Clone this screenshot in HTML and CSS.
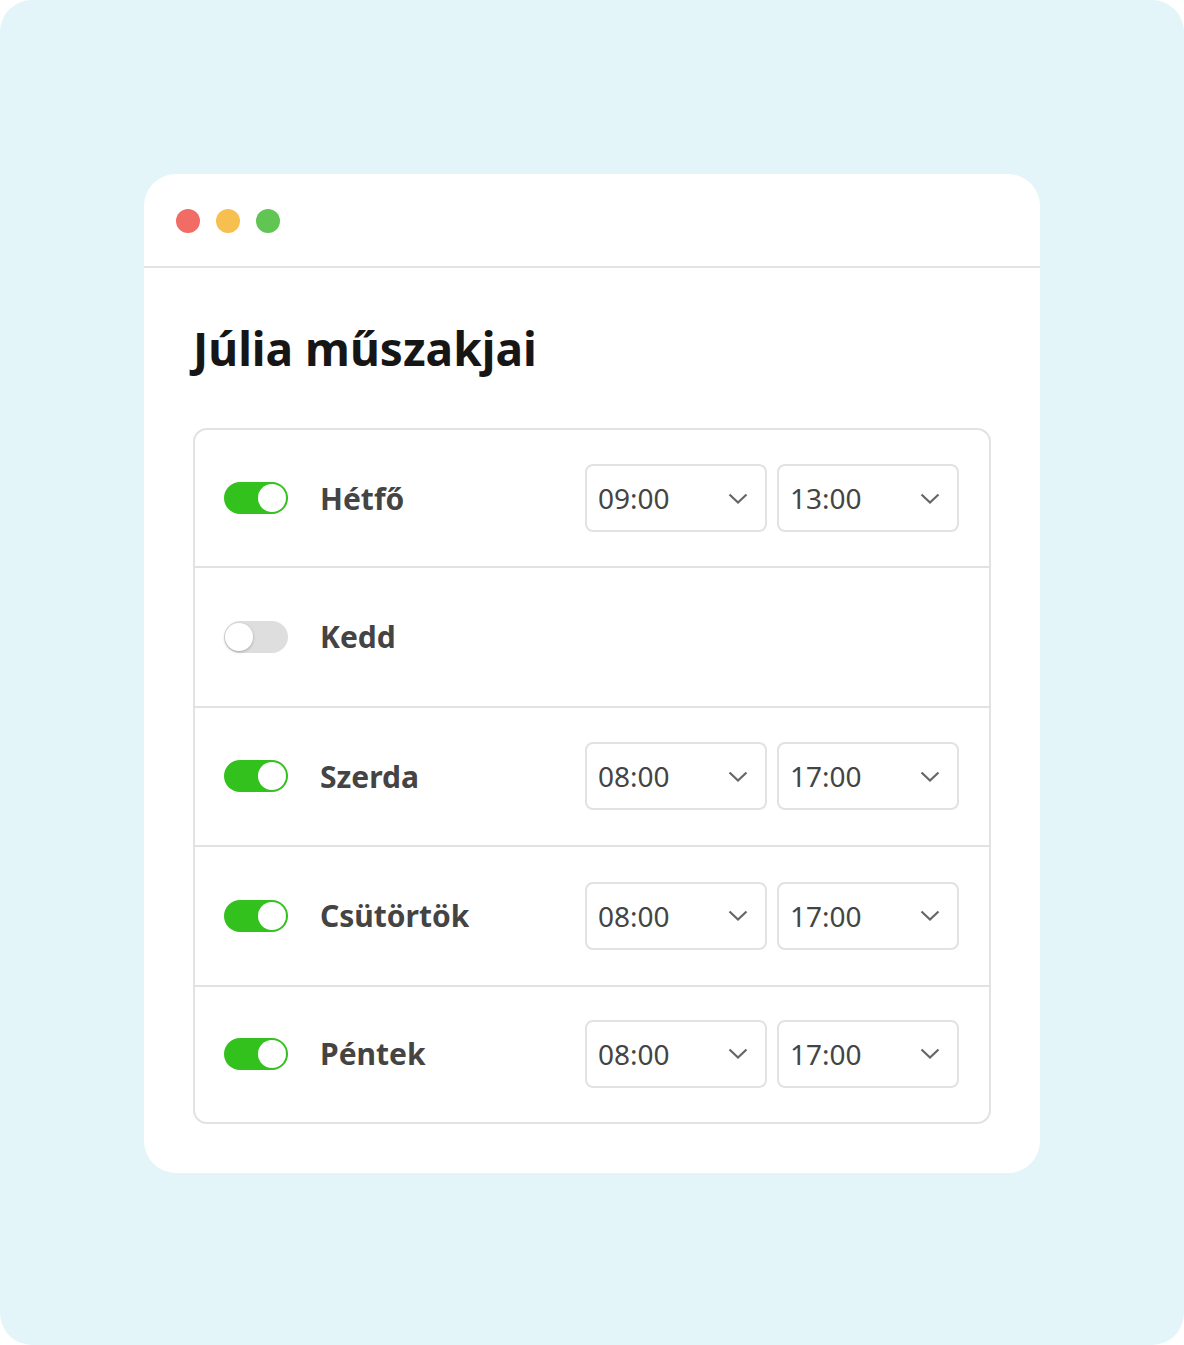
FILE: index.html
```html
<!DOCTYPE html>
<html lang="hu">
<head>
<meta charset="utf-8">
<title>Júlia műszakjai</title>
<link rel="stylesheet" href="styles.css">
</head>
<body>
<div class="stage">
  <div class="window">
    <div class="titlebar">
      <span class="dot red"></span>
      <span class="dot yellow"></span>
      <span class="dot green"></span>
    </div>
    <div class="content">
      <h1 class="title">Júlia műszakjai</h1>
      <div class="list">
        <div class="row">
          <span class="toggle on"><span class="knob"></span></span>
          <span class="day">Hétfő</span>
          <div class="times">
            <div class="select"><span>09:00</span><svg class="chev" viewBox="0 0 20 11"><path d="M1.5 1.5 L10 9.5 L18.5 1.5"/></svg></div>
            <div class="select"><span>13:00</span><svg class="chev" viewBox="0 0 20 11"><path d="M1.5 1.5 L10 9.5 L18.5 1.5"/></svg></div>
          </div>
        </div>
        <div class="row">
          <span class="toggle off"><span class="knob"></span></span>
          <span class="day">Kedd</span>
        </div>
        <div class="row">
          <span class="toggle on"><span class="knob"></span></span>
          <span class="day">Szerda</span>
          <div class="times">
            <div class="select"><span>08:00</span><svg class="chev" viewBox="0 0 20 11"><path d="M1.5 1.5 L10 9.5 L18.5 1.5"/></svg></div>
            <div class="select"><span>17:00</span><svg class="chev" viewBox="0 0 20 11"><path d="M1.5 1.5 L10 9.5 L18.5 1.5"/></svg></div>
          </div>
        </div>
        <div class="row">
          <span class="toggle on"><span class="knob"></span></span>
          <span class="day">Csütörtök</span>
          <div class="times">
            <div class="select"><span>08:00</span><svg class="chev" viewBox="0 0 20 11"><path d="M1.5 1.5 L10 9.5 L18.5 1.5"/></svg></div>
            <div class="select"><span>17:00</span><svg class="chev" viewBox="0 0 20 11"><path d="M1.5 1.5 L10 9.5 L18.5 1.5"/></svg></div>
          </div>
        </div>
        <div class="row">
          <span class="toggle on"><span class="knob"></span></span>
          <span class="day">Péntek</span>
          <div class="times">
            <div class="select"><span>08:00</span><svg class="chev" viewBox="0 0 20 11"><path d="M1.5 1.5 L10 9.5 L18.5 1.5"/></svg></div>
            <div class="select"><span>17:00</span><svg class="chev" viewBox="0 0 20 11"><path d="M1.5 1.5 L10 9.5 L18.5 1.5"/></svg></div>
          </div>
        </div>
      </div>
    </div>
  </div>
</div>
</body>
</html>
```
FILE: styles.css
```css
html, body {
  margin: 0;
  padding: 0;
  background: #ffffff;
}
body {
  font-family: "Noto Sans", "Open Sans", sans-serif;
}
.stage {
  width: 1184px;
  height: 1345px;
  box-sizing: border-box;
  background: #e3f5f8;
  border-radius: 32px;
  padding-top: 174px;
  display: flex;
  justify-content: center;
  align-items: flex-start;
}
.window {
  width: 896px;
  height: 999px;
  background: #ffffff;
  border-radius: 32px;
}
.titlebar {
  height: 94px;
  box-sizing: border-box;
  padding: 2px 0 0 32px;
  border-bottom: 2px solid #e4e4e4;
  display: flex;
  align-items: center;
  gap: 16px;
}
.dot {
  width: 24px;
  height: 24px;
  border-radius: 50%;
  display: block;
}
.dot.red { background: #f06c64; }
.dot.yellow { background: #f6bf50; }
.dot.green { background: #61c554; }
.content {
  padding: 0 0 0 49px;
}
.title {
  margin: 50px 0 0 0;
  height: 60px;
  font-size: 46px;
  font-weight: 700;
  color: #161616;
  line-height: 60px;
}
.list {
  margin-top: 50px;
  border: 2px solid #e2e2e2;
  border-radius: 14px;
  width: 798px;
  box-sizing: border-box;
}
.row {
  height: 139.5px;
  box-sizing: border-box;
  display: flex;
  align-items: center;
  padding: 0 30px 0 29px;
  border-top: 2px solid #e2e2e2;
}
.row:first-child {
  border-top: none;
  height: 136px;
}
.row:last-child {
  height: 137.5px;
  padding-bottom: 1px;
}
.toggle {
  width: 64px;
  height: 32px;
  border-radius: 16px;
  display: flex;
  align-items: center;
  box-sizing: border-box;
  flex: none;
}
.toggle.on {
  background: #33c11d;
  justify-content: flex-end;
  padding-right: 2px;
}
.toggle.off {
  background: #dedede;
  justify-content: flex-start;
  padding-left: 1px;
}
.knob {
  width: 28px;
  height: 28px;
  border-radius: 50%;
  background: #ffffff;
  display: block;
}
.toggle.off .knob {
  box-shadow: 0 1px 3px rgba(0, 0, 0, 0.25);
}
.day {
  margin-left: 32px;
  font-size: 30px;
  font-weight: 700;
  color: #444444;
}
.times {
  margin-left: auto;
  display: flex;
  gap: 10px;
}
.select {
  width: 182px;
  height: 68px;
  border: 2px solid #e2e2e2;
  border-radius: 8px;
  box-sizing: border-box;
  display: flex;
  align-items: center;
  justify-content: space-between;
  padding: 0 17px 0 11px;
  font-size: 28px;
  color: #444444;
}
.chev {
  width: 20px;
  height: 11px;
  fill: none;
  stroke: #666666;
  stroke-width: 2.2;
}
```
